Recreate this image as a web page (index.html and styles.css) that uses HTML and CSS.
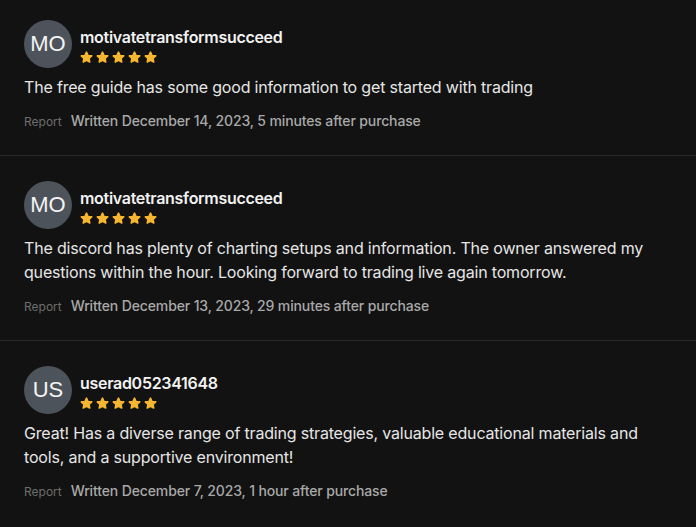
FILE: index.html
```html
<!DOCTYPE html>
<html lang="en">
<head>
<meta charset="utf-8">
<link rel="stylesheet" href="styles.css">
</head>
<body>
<svg width="0" height="0" class="defs">
  <defs>
    <symbol id="star" viewBox="0 0 24 24">
      <path d="M12 2.2l2.9 6.1 6.7.8-5 4.6 1.4 6.6L12 17 6 20.3l1.4-6.6-5-4.6 6.7-.8z" fill="#f7b62f" stroke="#f7b62f" stroke-width="3" stroke-linejoin="round"/>
    </symbol>
  </defs>
</svg>
<div class="reviews">
  <div class="review">
    <div class="head">
      <div class="avatar">MO</div>
      <div class="info">
        <div class="name">motivatetransformsucceed</div>
        <div class="stars">
          <svg class="star"><use href="#star"/></svg><svg class="star"><use href="#star"/></svg><svg class="star"><use href="#star"/></svg><svg class="star"><use href="#star"/></svg><svg class="star"><use href="#star"/></svg>
        </div>
      </div>
    </div>
    <p class="body">The free guide has some good information to get started with trading</p>
    <div class="meta"><span class="report">Report</span><span class="written">Written December 14, 2023, 5 minutes after purchase</span></div>
  </div>
  <div class="review">
    <div class="head">
      <div class="avatar">MO</div>
      <div class="info">
        <div class="name">motivatetransformsucceed</div>
        <div class="stars">
          <svg class="star"><use href="#star"/></svg><svg class="star"><use href="#star"/></svg><svg class="star"><use href="#star"/></svg><svg class="star"><use href="#star"/></svg><svg class="star"><use href="#star"/></svg>
        </div>
      </div>
    </div>
    <p class="body">The discord has plenty of charting setups and information. The owner answered my questions within the hour. Looking forward to trading live again tomorrow.</p>
    <div class="meta"><span class="report">Report</span><span class="written">Written December 13, 2023, 29 minutes after purchase</span></div>
  </div>
  <div class="review">
    <div class="head">
      <div class="avatar">US</div>
      <div class="info">
        <div class="name">userad052341648</div>
        <div class="stars">
          <svg class="star"><use href="#star"/></svg><svg class="star"><use href="#star"/></svg><svg class="star"><use href="#star"/></svg><svg class="star"><use href="#star"/></svg><svg class="star"><use href="#star"/></svg>
        </div>
      </div>
    </div>
    <p class="body">Great! Has a diverse range of trading strategies, valuable educational materials and tools, and a supportive environment!</p>
    <div class="meta"><span class="report">Report</span><span class="written">Written December 7, 2023, 1 hour after purchase</span></div>
  </div>
</div>
</body>
</html>
```

FILE: styles.css
```css
html, body {
  margin: 0;
  padding: 0;
  background: #121212;
}
body {
  font-family: Inter, "Liberation Sans", sans-serif;
  color: #e8e8e8;
  width: 696px;
  height: 527px;
  overflow: hidden;
}
.defs {
  position: absolute;
  width: 0;
  height: 0;
}
.reviews {
  display: flex;
  flex-direction: column;
}
.review {
  padding: 25px 24px 24px;
  border-bottom: 1px solid #2a2a2a;
}
.review:first-child {
  padding-top: 20px;
}
.review:last-child {
  border-bottom: none;
}
.head {
  display: flex;
  gap: 8px;
  align-items: flex-start;
}
.avatar {
  width: 48px;
  height: 48px;
  border-radius: 50%;
  background: #4d535b;
  color: #f4f4f4;
  font-family: "Liberation Sans", Arial, sans-serif;
  font-size: 22px;
  display: flex;
  align-items: center;
  justify-content: center;
  flex-shrink: 0;
}
.info {
  padding-top: 7px;
  display: flex;
  flex-direction: column;
  gap: 4px;
}
.name {
  font-size: 16px;
  line-height: 20px;
  font-weight: 600;
  letter-spacing: -0.3px;
  color: #f2f2f2;
}
.stars {
  display: flex;
  gap: 3px;
  height: 13px;
}
.star {
  width: 13px;
  height: 13px;
}
.body {
  margin: 7px 0 0;
  font-size: 16px;
  line-height: 24px;
  letter-spacing: -0.18px;
  color: #e6e6e6;
}
.meta {
  margin-top: 12px;
  display: flex;
  align-items: baseline;
  gap: 9px;
  height: 20px;
  line-height: 20px;
  overflow: hidden;
}
.report {
  font-size: 12px;
  color: #6e6e6e;
}
.written {
  font-size: 14px;
  font-weight: 500;
  letter-spacing: -0.13px;
  color: #a9a9a9;
}
```
